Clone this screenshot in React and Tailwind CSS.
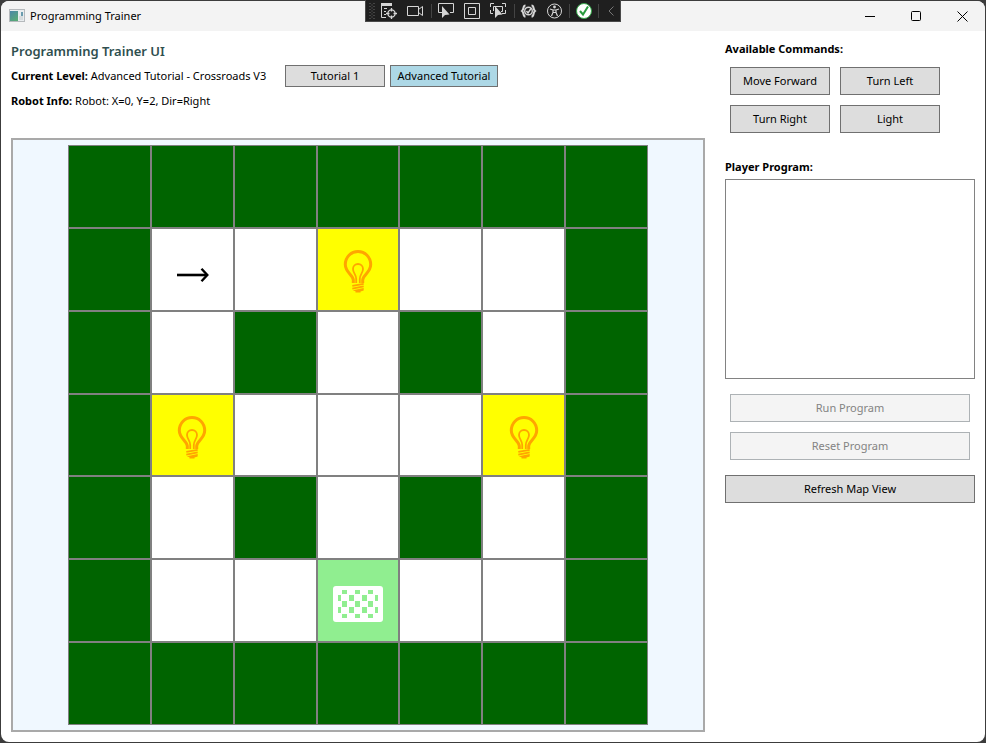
import React from 'react';

const MAP = ['#######', '#R.L..#', '#.#.#.#', '#L...L#', '#.#.#.#', '#..G..#', '#######'];

const CELL_COLORS = {
  '#': 'bg-[#006400]',
  '.': 'bg-white',
  R: 'bg-white',
  L: 'bg-[#ffff00]',
  G: 'bg-[#90ee90]',
};

function Bulb() {
  return (
    <svg width="30" height="44" viewBox="0 0 30 44" fill="none" stroke="#ffa500" className="mt-1" aria-label="Light">
      <path
        d="M10.3 34V31C10.3 26 2.3 23.5 2.3 15.5C2.3 8 8 2.5 15 2.5S27.700 8 27.7 15.5C27.7 23.5 19.7 26 19.7 31V34"
        strokeWidth="3"
      />
      <path
        d="M13.2 34V30C13.2 25.5 10 24 10 20C10 17 12.2 15 15 15S20 17 20 20C20 24 16.8 25.5 16.8 30V34"
        strokeWidth="1.8"
      />
      <path d="M9.3 36.8L20.7 34.8M9.3 39.6L20.7 37.4" strokeWidth="1.7" />
      <path d="M9.8 41.2L20.7 39V41.5L17.5 42.5V43.5H12.5V42.3Z" fill="#ffa500" stroke="none" />
    </svg>
  );
}

function RobotArrow() {
  return (
    <svg width="34" height="16" viewBox="0 0 34 16" fill="none" stroke="#000" className="mt-3" aria-label="Robot">
      <path d="M2 8H32" strokeWidth="2.6" />
      <path d="M26.5 1.8L32.3 8L26.5 14.2" strokeWidth="2.4" />
    </svg>
  );
}

const CHECKS = [
  [9, 4, 5, 4], [22, 4, 5, 4], [35, 4, 5, 4],
  [5, 9, 3, 6], [16, 9, 5, 6], [29, 9, 5, 6], [42, 9, 3, 6],
  [9, 15, 5, 6], [22, 15, 5, 6], [35, 15, 5, 6],
  [5, 21, 3, 6], [16, 21, 5, 6], [29, 21, 5, 6], [42, 21, 3, 6],
  [9, 28, 5, 4], [22, 28, 5, 4], [35, 28, 5, 4],
];

function Goal() {
  return (
    <svg width="50" height="36" viewBox="0 0 50 36" className="mt-1.5" aria-label="Goal">
      <rect width="50" height="36" rx="3" fill="#fff" />
      {CHECKS.map(([x, y, w, h]) => (
        <rect key={x + '-' + y} x={x} y={y} width={w} height={h} fill="#90ee90" />
      ))}
    </svg>
  );
}

function DebugToolbar() {
  return (
    <div className="absolute top-0 left-1/2 h-[22px] w-64 -translate-x-1/2 border border-t-0 border-[#4a4a4a] bg-[#1f1f1f]">
      <svg width="254" height="21" viewBox="366 0 254 21" fill="none" stroke="#d6d6d6" aria-label="Debug toolbar">
        <path d="M370 3V19M374 3V19" stroke="#6a6a6a" strokeDasharray="1 2" />
        <path d="M372 4.5V19" stroke="#6a6a6a" strokeDasharray="1 2" />
        <path d="M381 4.5H392" strokeWidth="3" />
        <path d="M381.5 3V17.5H386M384 8.5H387M384 11.5H386M384 14.5H386" />
        <circle cx="391.5" cy="13.5" r="3.6" strokeWidth="1.3" />
        <path d="M391.5 8V11.5M391.5 15.5V19M386 13.5H389.5M393.5 13.5H397" strokeWidth="1.3" />
        <path d="M407.5 6.5H418.5V15.5H407.5ZM418.5 9.5L422.5 6.5V15.5L418.5 12.5" />
        <path d="M431.5 4V18M514.5 4V18M569.5 4V18M598.5 4V18" stroke="#444" />
        <path d="M443 12.5H438.5V3.5H453.5V12.5H450" />
        <path d="M442 6V18L445 15L449.5 14.5Z" fill="#d6d6d6" stroke="none" />
        <path d="M464.5 3.5H479.5V18.5H464.5ZM468.5 7.5H475.5V14.5H468.5Z" />
        <path d="M490.5 7V3.5H494M502 3.5H505.5V7M490.5 10V13.5H493M505.5 10V13.5H502M493.5 11V6.5H502.5V11.5H501" />
        <path d="M495 6V18L498 15L502.5 14.5Z" fill="#d6d6d6" stroke="none" />
        <path d="M525.5 5.5C522.5 5.5 524.5 9 522 11C524.5 13 522.5 16.500 525.5 16.5M531.5 5.5C534.5 5.5 532.5 9 535 11C532.5 13 534.5 16.500 531.5 16.5" strokeWidth="2" />
        <circle cx="528.5" cy="11" r="3.8" strokeWidth="1.4" />
        <path d="M526.5 11L528 13L531 8.5" strokeWidth="1.4" />
        <circle cx="554.5" cy="11" r="7" />
        <circle cx="554.5" cy="7" r="1.4" fill="#d6d6d6" stroke="none" />
        <path d="M550 9L553 10H556L559 9M553 10V12.5L551.5 16M556 10V12.5L557.5 16M553 12.5H556" strokeWidth="1.2" />
        <circle cx="584" cy="11" r="7.5" fill="#fff" stroke="#36a84a" />
        <path d="M580 11L583 14.5L588 6.5" stroke="#289b3d" strokeWidth="2" />
        <path d="M613.5 6.5L609 11L613.5 15.5" stroke="#777" />
      </svg>
    </div>
  );
}

const BUTTON = 'border border-[#707070] bg-[#dddddd] text-black';
const DISABLED = 'mx-[5px] h-7 border border-[#adb2b5] bg-[#f4f4f4] text-[#838383]';

function TitleBar() {
  return (
    <header className="flex h-[30px] shrink-0 items-center bg-[#f3f3f3] pl-2">
      <svg width="16" height="14" viewBox="0 0 16 14" aria-hidden="true">
        <defs>
          <linearGradient id="appIcon" x1="0" y1="0" x2="0.6" y2="1">
            <stop offset="0" stopColor="#4a86a8" />
            <stop offset="1" stopColor="#58a878" />
          </linearGradient>
        </defs>
        <rect x="0.5" y="0.5" width="15" height="12" fill="#e8ecee" stroke="#b5b9bc" />
        <rect x="1" y="2" width="8" height="10" fill="url(#appIcon)" />
        <rect x="12" y="3" width="2" height="4" fill="#6a9cae" />
        <path d="M10 8H14M10 10H14" stroke="#c4cacc" />
      </svg>
      <h1 className="ml-[5px] flex-1">Programming Trainer</h1>
      <button aria-label="Minimize" className="flex h-full w-[46px] items-center justify-center">
        <svg width="10" height="10" stroke="#000"><path d="M0 5.5H10" /></svg>
      </button>
      <button aria-label="Maximize" className="flex h-full w-[46px] items-center justify-center">
        <svg width="10" height="10" fill="none" stroke="#000"><rect x="0.5" y="0.5" width="9" height="9" rx="1" /></svg>
      </button>
      <button aria-label="Close" className="flex h-full w-[46px] items-center justify-center">
        <svg width="11" height="11" stroke="#000"><path d="M0.5 0.5L10.5 10.5M10.5 0.5L0.5 10.5" /></svg>
      </button>
    </header>
  );
}

export default function App() {
  return (
    <div className="relative flex h-screen flex-col bg-[#3c3c3c] p-px font-['Noto_Sans','Open_Sans',sans-serif] text-[11px] leading-4 text-black">
      <div className="flex min-h-0 flex-1 flex-col overflow-hidden rounded-lg bg-white">
        <TitleBar />
        <main className="flex min-h-0 flex-1 gap-5 p-[10px]">
          <section className="flex min-w-0 flex-1 flex-col">
            <h2 className="text-[13px] leading-5 font-semibold text-[#2f4f4f]">Programming Trainer UI</h2>
            <div className="mt-1 flex h-[22px] items-center">
              <p className="min-w-[264px] whitespace-nowrap"><b>Current Level:</b> Advanced Tutorial - Crossroads V3</p>
              <button className={'ml-[10px] h-[22px] w-[100px] ' + BUTTON}>Tutorial 1</button>
              <button className="ml-[5px] h-[22px] w-[108px] border border-[#707070] bg-[#add8e6] whitespace-nowrap">Advanced Tutorial</button>
            </div>
            <p className="mt-[6px]"><b>Robot Info:</b> Robot: X=0, Y=2, Dir=Right</p>
            <div className="mt-[29px] flex min-h-0 flex-1 justify-center border-2 border-[#a9a9a9] bg-[#f0f8ff] p-[5px]">
              <div className="grid aspect-square h-full grid-cols-7 grid-rows-7">
                {MAP.flatMap((row, y) =>
                  [...row].map((cell, x) => (
                    <div key={y + '-' + x} className={'flex items-center justify-center border border-[#808080] ' + CELL_COLORS[cell]}>
                      {cell === 'R' && <RobotArrow />}
                      {cell === 'L' && <Bulb />}
                      {cell === 'G' && <Goal />}
                    </div>
                  ))
                )}
              </div>
            </div>
          </section>
          <aside className="flex w-[250px] shrink-0 flex-col">
            <h3 className="font-bold">Available Commands:</h3>
            <div className="mt-[10px] ml-[5px] flex flex-wrap gap-[10px]">
              {['Move Forward', 'Turn Left', 'Turn Right', 'Light'].map((name) => (
                <button key={name} className={'h-7 w-[100px] ' + BUTTON}>{name}</button>
              ))}
            </div>
            <label htmlFor="program" className="mt-[26px] font-bold">Player Program:</label>
            <textarea id="program" readOnly className="mt-1 h-[200px] resize-none border border-[#828282] bg-white" />
            <button disabled className={'mt-[15px] ' + DISABLED}>Run Program</button>
            <button disabled className={'mt-[10px] ' + DISABLED}>Reset Program</button>
            <button className={'mt-[15px] h-7 ' + BUTTON}>Refresh Map View</button>
          </aside>
        </main>
      </div>
      <DebugToolbar />
    </div>
  );
}
